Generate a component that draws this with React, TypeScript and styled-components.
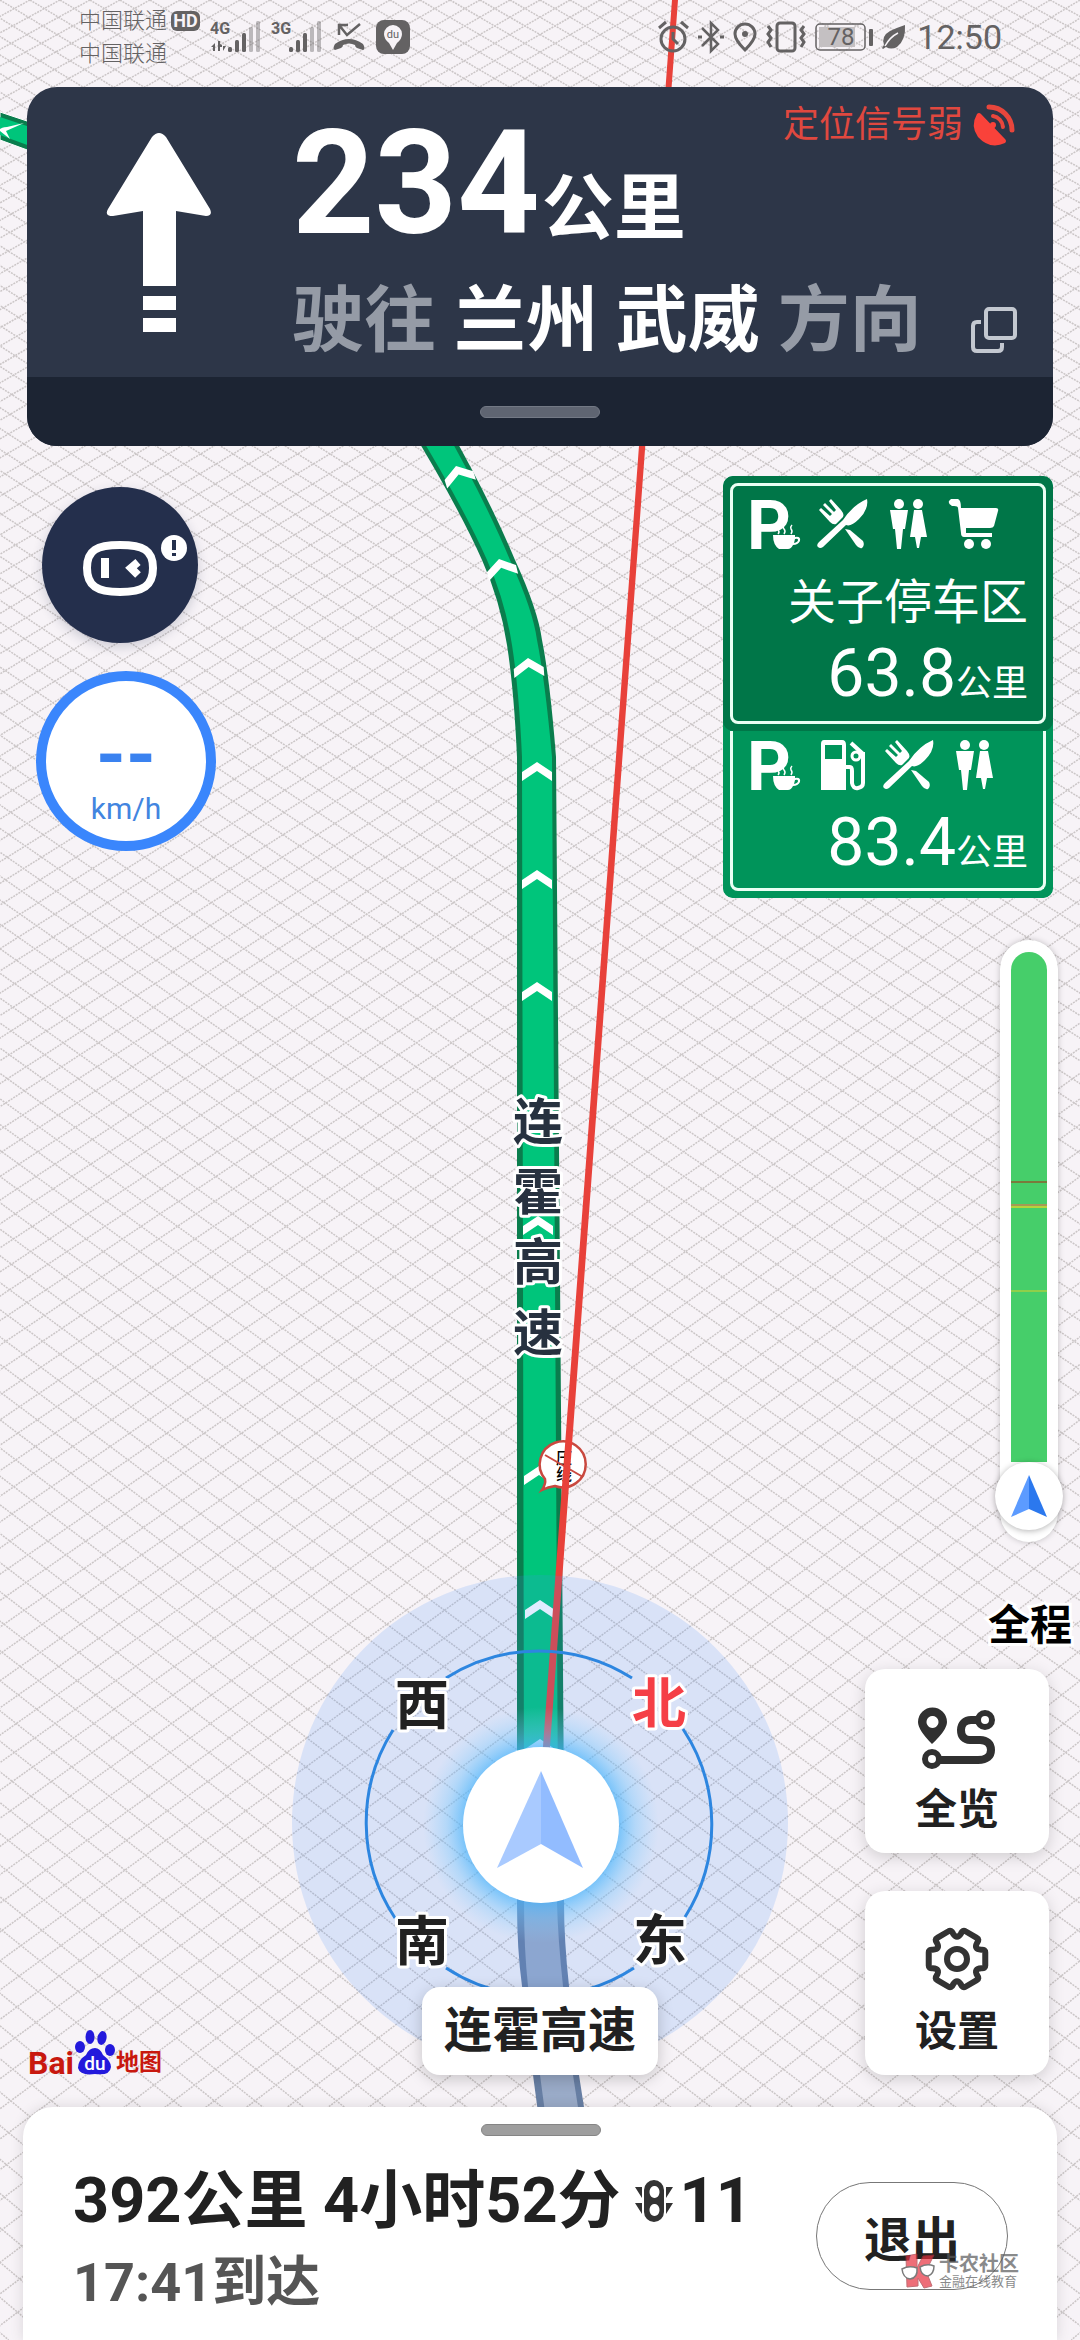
import React from 'react';
import styled, { createGlobalStyle } from 'styled-components';

const fontStack = 'Roboto, "Noto Sans CJK SC", sans-serif';
const ink = '#212121';
const statusInk = '#646263';

const GlobalStyle = createGlobalStyle`
  *, *::before, *::after { box-sizing: border-box; }
  body { margin: 0; background: #f7f3f7; font-family: ${fontStack}; color: ${ink}; }
  button { font: inherit; color: inherit; border: 0; padding: 0; background: none; cursor: pointer; }
  svg { overflow: visible; }
`;

/* ---------- shell ---------- */

const Screen = styled.div`
  position: relative;
  display: flex;
  flex-direction: column;
  min-height: 100vh;
  overflow: hidden;
  background: #f7f3f7;
`;

const MapCanvas = styled.svg`
  position: absolute;
  inset: 0;
  width: 100%;
  height: 100%;
`;

const Overlay = styled.div`
  position: relative;
  display: flex;
  flex: 1;
  flex-direction: column;
`;

/* ---------- status bar ---------- */

const StatusBar = styled.header`
  display: flex;
  justify-content: space-between;
  height: 87px;
  padding: 5px 78px 0 79px;
  color: ${statusInk};
`;

const StatusGroup = styled.div<{ $gap: number }>`
  display: flex;
  align-items: center;
  gap: ${(p) => p.$gap}px;
  height: 64px;
`;

const Carriers = styled.div`
  display: flex;
  flex-direction: column;
  font-size: 22px;
  font-weight: 300;
  line-height: 33px;
`;

const CarrierRow = styled.div`
  display: flex;
  align-items: center;
  gap: 4px;
`;

const HdBadge = styled.span`
  width: 29px;
  border-radius: 6px;
  background: ${statusInk};
  color: #f7f3f7;
  font-size: 18px;
  font-weight: 700;
  line-height: 20px;
  text-align: center;
`;

const Clock = styled.time`
  margin-left: 2px;
  font-size: 34px;
  line-height: 40px;
`;

/* ---------- guidance card ---------- */

const GuideCard = styled.section`
  margin: 0 27px;
  border-radius: 30px;
  overflow: hidden;
  background: #2d3648;
  color: #fff;
`;

const GuideMain = styled.div`
  display: grid;
  grid-template-columns: 265px minmax(0, 1fr);
  padding: 15px 36px 16px 0;
`;

const TurnArrow = styled.svg`
  display: block;
  margin: 30px 0 0 79px;
`;

const GuideBody = styled.div`
  display: flex;
  flex-direction: column;
  gap: 25px;
`;

const GuideRow = styled.div`
  display: flex;
  justify-content: space-between;
  align-items: flex-start;
`;

const GuideDistance = styled.p`
  margin: 0;
  padding-top: 10px;
  font-size: 144px;
  font-weight: 700;
  line-height: 144px;
  white-space: nowrap;
`;

const GuideUnit = styled.span`
  margin-left: 2px;
  font-size: 72px;
  line-height: 72px;
`;

const SignalWarning = styled.div`
  display: flex;
  align-items: center;
  gap: 10px;
  padding-top: 2px;
  color: #e0483f;
  font-size: 36px;
  line-height: 42px;
`;

const GuideDirection = styled.p`
  margin: 0;
  font-size: 72px;
  font-weight: 700;
  line-height: 80px;
  white-space: nowrap;
`;

const Muted = styled.span`
  color: #959ba6;
`;

const CopyButton = styled.button`
  align-self: center;
  padding-top: 18px;
  line-height: 0;
`;

const GuideFooter = styled.div`
  display: flex;
  justify-content: center;
  padding: 29px 0 28px;
  background: #1c2433;
`;

const Handle = styled.span<{ $fill: string; $edge: string }>`
  width: 120px;
  height: 12px;
  border: 1px solid ${(p) => p.$edge};
  border-radius: 6px;
  background: ${(p) => p.$fill};
`;

/* ---------- floating controls ---------- */

const Stage = styled.main`
  display: grid;
  flex: 1;
  grid-template-columns: minmax(0, 1fr) auto minmax(0, 1fr);
  padding: 30px 0 32px;
`;

const LeftRail = styled.div`
  display: flex;
  flex-direction: column;
  justify-content: space-between;
  padding: 11px 0 0 28px;
`;

const Gauges = styled.div`
  display: flex;
  flex-direction: column;
  align-items: flex-start;
  gap: 28px;
`;

const AssistantButton = styled.button`
  width: 156px;
  height: 156px;
  margin-left: 14px;
  border-radius: 50%;
  background: #242f4c;
  box-shadow: 0 4px 12px rgba(36, 47, 76, 0.2);
  line-height: 0;
`;

const SpeedDial = styled.div`
  display: flex;
  flex-direction: column;
  align-items: center;
  width: 180px;
  height: 180px;
  margin-left: 8px;
  padding-top: 40px;
  border: 10px solid #3a86fc;
  border-radius: 50%;
  background: #fff;
  color: #4285e0;
`;

const SpeedValue = styled.strong`
  color: #3a82f0;
  font-size: 76px;
  line-height: 68px;
`;

const SpeedUnit = styled.span`
  font-size: 30px;
  line-height: 40px;
`;

const Brand = styled.div`
  display: flex;
  align-items: flex-end;
  gap: 1px;
  color: #c8180f;
  font-weight: 700;
  line-height: 24px;
`;

const BrandLatin = styled.span`
  font-size: 32px;
`;

const BrandHan = styled.span`
  font-size: 23px;
`;

const RoadPill = styled.div`
  align-self: end;
  padding: 0 22px;
  border-radius: 18px;
  background: #fff;
  box-shadow: 0 4px 16px rgba(0, 0, 0, 0.2);
  font-size: 48px;
  font-weight: 700;
  line-height: 88px;
`;

const RightRail = styled.div`
  display: flex;
  flex-direction: column;
  align-items: flex-end;
`;

const SignBoard = styled.div`
  width: 330px;
  margin-right: 27px;
  border-radius: 10px;
  overflow: hidden;
  background: #00945a;
  color: #fff;
`;

const Sign = styled.section<{ $next?: boolean }>`
  padding: ${(p) => (p.$next ? '0 7px 7px' : '7px')};
  border-radius: 10px;
  background: ${(p) => (p.$next ? '#00945a' : '#007648')};
`;

const SignFrame = styled.div<{ $next?: boolean }>`
  display: flex;
  flex-direction: column;
  padding: ${(p) => (p.$next ? '9px 15px 5px 18px' : '13px 15px 7px 18px')};
  border: 3px solid #eafff4;
  border-top-width: ${(p) => (p.$next ? 0 : 3)}px;
  border-radius: ${(p) => (p.$next ? '0 0 8px 8px' : '8px')};
`;

const SignIcons = styled.div`
  display: flex;
  gap: 16px;
`;

const SignName = styled.h2`
  margin: 26px 0 0;
  font-size: 48px;
  font-weight: 400;
  line-height: 56px;
  text-align: right;
`;

const SignDistance = styled.p<{ $next?: boolean }>`
  margin: ${(p) => (p.$next ? 13 : 3)}px 0 0;
  font-size: 66px;
  line-height: 80px;
  text-align: right;
`;

const SignUnit = styled.span`
  font-size: 36px;
  line-height: 36px;
`;

const ProgressTrack = styled.div`
  display: flex;
  flex: 1;
  flex-direction: column;
  align-items: center;
  width: 58px;
  min-height: 300px;
  margin: 42px 22px 0 0;
  padding: 12px 11px;
  border-radius: 29px;
  background: #fff;
  box-shadow: 0 0 6px rgba(0, 0, 0, 0.22);
`;

const ProgressFill = styled.div`
  display: flex;
  flex: 1;
  flex-direction: column;
  width: 36px;
  border-radius: 18px 18px 0 0;
  background: #46ce6a;
`;

const Stretch = styled.span<{ $grow: number }>`
  flex: ${(p) => p.$grow} 0 0;
`;

const Jam = styled.span<{ $color: string }>`
  height: 2px;
  background: ${(p) => p.$color};
`;

const ProgressKnob = styled.div`
  display: flex;
  align-items: center;
  justify-content: center;
  width: 68px;
  height: 68px;
  border-radius: 50%;
  background: #fff;
  box-shadow: 0 1px 6px rgba(0, 0, 0, 0.3);
`;

const RouteScope = styled.span`
  margin: 63px 8px 22px 0;
  color: #000;
  font-size: 42px;
  font-weight: 700;
  line-height: 42px;
  paint-order: stroke fill;
  -webkit-text-stroke: 6px #fff;
`;

const ToolStack = styled.div`
  display: flex;
  flex-direction: column;
  gap: 38px;
  margin-right: 31px;
`;

const ToolButton = styled.button`
  display: flex;
  flex-direction: column;
  align-items: center;
  justify-content: flex-end;
  gap: 16px;
  width: 184px;
  height: 184px;
  padding-bottom: 18px;
  border-radius: 20px;
  background: #fff;
  box-shadow: 0 4px 16px rgba(0, 0, 0, 0.16);
  font-size: 42px;
  font-weight: 700;
  line-height: 50px;
`;

/* ---------- bottom sheet ---------- */

const Sheet = styled.footer`
  position: relative;
  display: flex;
  flex-direction: column;
  gap: 25px;
  margin: 0 23px;
  padding: 17px 49px 25px 50px;
  border-radius: 30px 30px 0 0;
  background: #fff;
  box-shadow: 0 0 14px rgba(0, 0, 0, 0.12);
`;

const SheetGrip = styled.div`
  display: flex;
  justify-content: center;
`;

const SheetRow = styled.div`
  display: flex;
  align-items: center;
  justify-content: space-between;
`;

const TripSummary = styled.p`
  display: flex;
  align-items: center;
  margin: 0 0 10px;
  font-size: 63px;
  font-weight: 700;
  line-height: 80px;
  white-space: pre;
`;

const Lights = styled.svg`
  margin: 0 7px 0 14px;
`;

const Arrival = styled.p`
  margin: 0;
  color: #555;
  font-size: 54px;
  font-weight: 700;
  line-height: 64px;
`;

const ExitButton = styled.button`
  width: 192px;
  height: 108px;
  margin-bottom: 4px;
  border: 1px solid #777;
  border-radius: 54px;
  font-size: 48px;
  font-weight: 700;
`;

const Watermark = styled.div`
  position: absolute;
  right: 38px;
  bottom: 51px;
  display: flex;
  align-items: center;
  gap: 4px;
  opacity: 0.7;
  color: #58595b;
`;

const WatermarkText = styled.div`
  display: flex;
  flex-direction: column;
  font-size: 13px;
  line-height: 14px;
`;

const WatermarkName = styled.strong`
  font-size: 20px;
  line-height: 21px;
`;

/* ---------- map drawing ---------- */

const gridPath = (() => {
  const span = 10260;
  const pitch = (y: number) => 30 + 0.0051 * y;
  let d = '';
  for (let n = 228; n <= 365; n += 1) {
    const top = span - n * pitch(0);
    const bottom = span - n * pitch(2340);
    d += `M${(540 + top).toFixed(1)} 0L${(540 + bottom).toFixed(1)} 2340`;
    d += `M${(540 - top).toFixed(1)} 0L${(540 - bottom).toFixed(1)} 2340`;
  }
  return d;
})();

const chevrons = [
  { x: 456, y: 466, turn: -17 },
  { x: 499, y: 559, turn: -14 },
  { x: 528, y: 658, turn: -4 },
  { x: 537, y: 762, turn: 0 },
  { x: 537, y: 870, turn: 0 },
  { x: 537, y: 982, turn: 0 },
  { x: 538, y: 1216, turn: 0 },
  { x: 539, y: 1466, turn: 0 },
  { x: 540, y: 1600, turn: 0 },
  { x: 540, y: 1739, turn: 0 },
];

const roadName = [
  { ch: '连', y: 1140 },
  { ch: '霍', y: 1210 },
  { ch: '高', y: 1280 },
  { ch: '速', y: 1351 },
];

const compass = [
  { ch: '西', x: 422, y: 1725, color: ink },
  { ch: '北', x: 659, y: 1723, color: '#f53f46' },
  { ch: '南', x: 422, y: 1961, color: ink },
  { ch: '东', x: 660, y: 1960, color: ink },
];

const MapText = styled.text<{ $size: number; $halo: number }>`
  font-family: ${fontStack};
  font-size: ${(p) => p.$size}px;
  font-weight: 700;
  text-anchor: middle;
  paint-order: stroke;
  stroke: #fff;
  stroke-width: ${(p) => p.$halo}px;
  stroke-linejoin: round;
`;

const BubbleText = styled.text`
  font-family: ${fontStack};
  font-size: 16px;
  font-weight: 500;
  text-anchor: middle;
`;

const NavMap = () => (
  <MapCanvas viewBox="0 0 1080 2340" preserveAspectRatio="xMidYMid slice" role="img" aria-label="导航地图">
    <defs>
      <radialGradient id="glow">
        <stop offset="0.62" stopColor="#3fb0fb" stopOpacity="0.75" />
        <stop offset="0.8" stopColor="#6cc4fc" stopOpacity="0.35" />
        <stop offset="1" stopColor="#8fd0fc" stopOpacity="0" />
      </radialGradient>
    </defs>
    <path d={gridPath} fill="none" stroke="#cbc6c7" strokeWidth="1.5" strokeDasharray="2 1" />

    <path d="M0 112L30 122V151L0 140Z" fill="#0a7d4d" stroke="#fff" />
    <path d="M0 117L30 127V146L0 135Z" fill="#00c57b" />
    <path d="M24 123L7 127Q-2 128 0 131L10 139L6 131Z" fill="#fff" />

    <path d="M517 1820V1903Q517 1950 522 1986L533 2075L539 2120H586L579 2075L569 1986Q564 1940 564 1903V1820Z" fill="#687fa4" />
    <path d="M524 1820V1903Q524 1950 528 1986L540 2075L546 2120H580L573 2075L563 1986Q558 1940 557 1903V1820Z" fill="#9aabc8" />

    <path d="M408 424Q458 506 482 560Q500 600 507 645Q514 690 517 757V1800H564L556 757Q550 680 542 640Q538 610 515 560Q490 500 447 424Z" fill="#0a7d4d" />
    <path d="M413 424Q463 506 487 560Q505 600 512 645Q519 690 522 757L524 1800H558L552 757Q545 680 537 640Q533 610 510 560Q485 500 442 424Z" fill="#00c57b" />
    {chevrons.map((c) => (
      <path key={c.y} d="M0 0L15 10V19L0 9L-15 19V10Z" fill="#fff" transform={`translate(${c.x} ${c.y}) rotate(${c.turn})`} />
    ))}

    {roadName.map((r) => (
      <MapText key={r.ch} $size={50} $halo={6} x="538" y={r.y} fill="#27313f">{r.ch}</MapText>
    ))}

    <g>
      <path d="M545 1479A23 23 0 1 1 555 1486Q548 1487 542 1490Q546 1484 545 1479Z" fill="#fff" stroke="#c9483f" strokeWidth="2.5" />
      <BubbleText x="564" y="1464">压</BubbleText>
      <BubbleText x="564" y="1480">线</BubbleText>
      <path d="M545 1455L583 1477" stroke="#c9483f" strokeWidth="2" />
    </g>

    <path d="M672 0H678L565 1540L549 1760H542L558 1540Z" fill="#e8413a" />

    <circle cx="540" cy="1823" r="248" fill="#4a90f7" fillOpacity="0.17" />
    <g fill="none" stroke="#2d86e0" strokeWidth="3">
      <path d="M446 1678A173 173 0 0 1 632 1678" />
      <path d="M683 1729A173 173 0 0 1 685 1917" />
      <path d="M634 1968A173 173 0 0 1 446 1968" />
      <path d="M395 1918A173 173 0 0 1 393 1730" />
    </g>
    <circle cx="541" cy="1825" r="118" fill="url(#glow)" />
    <circle cx="541" cy="1825" r="78" fill="#fff" />
    <path d="M541 1771L497 1868L541 1844Z" fill="#a9caff" />
    <path d="M541 1771L583 1868L541 1844Z" fill="#92bcff" />
    {compass.map((c) => (
      <MapText key={c.ch} $size={54} $halo={6} x={c.x} y={c.y} fill={c.color}>{c.ch}</MapText>
    ))}
  </MapCanvas>
);

/* ---------- icons ---------- */

const SignalBars = ({ label, data }: { label: string; data?: boolean }) => (
  <svg width="50" height="34" viewBox="0 0 50 34" fill={statusInk}>
    <text x="-1" y="14" fontFamily={fontStack} fontSize="16" fontWeight="700">{label}</text>
    {data && <path d="M4 31V23L0 27H2V31ZM7 21V31H9V27H11V25L9 24V21ZM12 26H15L12 31Z" />}
    <rect x="17" y="27" width="4" height="5" rx="1.5" />
    <rect x="24" y="20" width="4" height="12" rx="1.5" />
    <rect x="31" y="13" width="4" height="19" rx="1.5" />
    <g opacity="0.4">
      <rect x="38" y="7" width="4" height="25" rx="1.5" />
      <rect x="45" y="1" width="4" height="31" rx="1.5" />
    </g>
  </svg>
);

const MissedCall = () => (
  <svg width="32" height="28" viewBox="0 0 32 28" fill="none" stroke={statusInk}>
    <path d="M6 12V2H15M6 2L14 12L27 1" strokeWidth="2.5" />
    <path d="M2 21Q-1 26 2 27L8 25Q10 24 10 22Q16 19 22 22Q22 24 24 25L30 27Q33 26 30 21Q16 11 2 21Z" fill={statusInk} stroke="none" />
  </svg>
);

const MapAppIcon = () => (
  <svg width="34" height="34" viewBox="0 0 34 34">
    <rect width="34" height="34" rx="8" fill={statusInk} />
    <path d="M17 30L13 23Q8 19 8 14A9 9 0 0 1 26 14Q26 19 21 23Z" fill="#f7f3f7" />
    <text x="17" y="18" fontFamily={fontStack} fontSize="11" textAnchor="middle" fill={statusInk}>du</text>
  </svg>
);

const AlarmIcon = () => (
  <svg width="31" height="32" viewBox="0 0 31 32" fill="none" stroke={statusInk} strokeWidth="3">
    <circle cx="15" cy="18" r="12" />
    <path d="M15 11V18L20 23M1 7L8 1M23 1L30 7" />
  </svg>
);

const BluetoothIcon = () => (
  <svg width="26" height="32" viewBox="0 0 26 32" fill="none" stroke={statusInk} strokeWidth="2.5">
    <path d="M4 7L20 23L13 30V2L20 9L4 25" />
    <path d="M0 16H4M22 16H26" strokeWidth="3" />
  </svg>
);

const PinIcon = () => (
  <svg width="24" height="30" viewBox="0 0 24 30" fill="none" stroke={statusInk} strokeWidth="3">
    <path d="M12 28Q2 18 2 12A10 10 0 0 1 22 12Q22 18 12 28Z" />
    <circle cx="12" cy="12" r="3" fill={statusInk} stroke="none" />
  </svg>
);

const VibrateIcon = () => (
  <svg width="40" height="32" viewBox="0 0 40 32" fill="none" stroke={statusInk} strokeWidth="3">
    <rect x="11" y="2" width="18" height="28" rx="3" />
    <path d="M2 5L5 9L2 13L5 17L2 21L5 26M38 5L35 9L38 13L35 17L38 21L35 26" />
  </svg>
);

const BatteryIcon = () => (
  <svg width="58" height="28" viewBox="0 0 58 28">
    <rect x="1" y="1" width="49" height="26" rx="4" fill="none" stroke={statusInk} strokeWidth="1.5" />
    <rect x="4" y="4" width="36" height="20" fill="#c4c0c2" />
    <rect x="54" y="6" width="4" height="17" rx="1" fill={statusInk} />
    <text x="26" y="22" fontFamily={fontStack} fontSize="24" textAnchor="middle" fill={statusInk}>78</text>
  </svg>
);

const LeafIcon = () => (
  <svg width="24" height="26" viewBox="0 0 24 26">
    <path d="M23 1Q24 16 15 23Q9 26 4 23L1 25L0 24L2 21Q-1 12 8 7Q14 4 23 1Z" fill={statusInk} />
    <path d="M3 22Q8 13 16 9" fill="none" stroke="#f7f3f7" strokeWidth="1.5" />
  </svg>
);

const DishIcon = () => (
  <svg width="44" height="42" viewBox="0 0 44 42" fill="none" stroke="#e8463c" strokeLinecap="round">
    <path d="M4 10Q-3 22 5 33Q17 46 32 39Q34 37 32 35L8 10Q6 8 4 10Z" fill="#f9423a" stroke="none" />
    <path d="M19 23L16 27" stroke="#f9423a" strokeWidth="5" />
    <circle cx="20" cy="21" r="3" fill="#f9423a" stroke="none" />
    <path d="M16 3A23 23 0 0 1 39 26" strokeWidth="5" />
    <path d="M20 12A12 12 0 0 1 30 23" strokeWidth="4" />
  </svg>
);

const ParkingIcon = () => (
  <svg width="50" height="50" viewBox="0 0 50 50" fill="#fff">
    <text x="-4" y="50" fontFamily={fontStack} fontSize="68" fontWeight="700">P</text>
    <path d="M22 36H44V38Q50 37 49 42Q47 46 42 46Q40 50 37 50H28Q22 46 22 36ZM44 40L43 44Q47 43 47 41Q47 39 44 40Z" fillRule="evenodd" />
    <path d="M27 35Q29 33 27 31M33 35Q35 32 33 30Q31 27 34 25M40 35Q42 32 40 30Q39 28 41 26" fill="none" stroke="#fff" strokeWidth="1.5" />
  </svg>
);

const DiningIcon = () => (
  <svg width="50" height="50" viewBox="0 0 50 50" fill="#fff">
    <path d="M50 0Q52 10 42 20Q34 28 29 26L6 48Q3 50 1 48Q-1 46 2 43L26 21Q36 6 50 0Z" />
    <path d="M28 30L33 31L46 42Q48 46 45 49Q42 50 39 46Z" />
    <path d="M14 0L24 11Q29 17 24 20L19 25Q16 26 13 23L2 11L4 9L13 17L15 15L6 6L8 4L17 13L19 11L12 2Z" />
  </svg>
);

const RestroomIcon = () => (
  <svg width="50" height="50" viewBox="0 0 50 50" fill="#fff">
    <circle cx="16" cy="5" r="5" />
    <circle cx="35" cy="5" r="5" />
    <path d="M7 11H25L22 30H20L18 50H14L12 30H10Z" />
    <path d="M31 11H39L44 38H38L36 49H34L32 38H27Z" />
  </svg>
);

const CartIcon = () => (
  <svg width="50" height="50" viewBox="0 0 50 50" fill="#fff">
    <path d="M2 0H9Q12 1 12 9H47Q50 9 49 12L45 27Q44 29 41 29H17V34H43V38H15Q12 38 12 34L9 9Q9 7 5 7H3Q-1 5 0 2Z" />
    <circle cx="20" cy="45" r="5" />
    <circle cx="37" cy="45" r="5" />
  </svg>
);

const FuelIcon = () => (
  <svg width="50" height="50" viewBox="0 0 50 50" fill="#fff">
    <path d="M7 0H25Q29 0 29 5V50H4V4Q4 0 7 0ZM8 5V19H25V5Z" fillRule="evenodd" />
    <path d="M29 27H33Q35 27 35 31V43Q36 49 41 48Q46 47 46 43V14L34 3M46 19V12" fill="none" stroke="#fff" strokeWidth="4" />
    <circle cx="39" cy="16" r="4" fill="none" stroke="#fff" strokeWidth="3" />
  </svg>
);

const RouteIcon = () => (
  <svg width="78" height="61" viewBox="0 0 78 61" fill="none" stroke="#303030">
    <path d="M14 36Q0 22 0 14A14 14 0 0 1 29 14Q29 22 14 36ZM14 8A6 6 0 1 0 15 8Z" fill="#303030" fillRule="evenodd" stroke="none" />
    <circle cx="14" cy="51" r="7" strokeWidth="6" />
    <circle cx="67" cy="12" r="7" strokeWidth="6" />
    <path d="M22 52H60C69 52 73 48 73 42C73 36 69 32 62 32H52C46 32 43 28 43 22C43 16 47 12 53 12H60" strokeWidth="8" />
  </svg>
);

const gearOutline = (() => {
  const at = (deg: number, r: number) => {
    const a = (deg * Math.PI) / 180;
    return `${(32 + r * Math.cos(a)).toFixed(2)} ${(32 + r * Math.sin(a)).toFixed(2)}`;
  };
  let d = '';
  for (let k = 0; k < 360; k += 60) {
    d += `${k ? 'L' : 'M'}${at(k - 13, 29)}L${at(k + 13, 29)}`;
    d += `Q${at(k + 19, 30)} ${at(k + 21, 26)}Q${at(k + 30, 19)} ${at(k + 39, 26)}Q${at(k + 41, 30)} ${at(k + 47, 29)}`;
  }
  return `${d}Z`;
})();

const GearIcon = () => (
  <svg width="64" height="64" viewBox="0 0 64 64" fill="none" stroke="#333" strokeWidth="6" strokeLinejoin="round">
    <path d={gearOutline} />
    <circle cx="32" cy="32" r="10" />
  </svg>
);

const AssistantIcon = () => (
  <svg width="156" height="156" viewBox="0 0 156 156" fill="none" stroke="#fff">
    <path d="M78 58C101 58 111 63 111 81C111 99 101 105 78 105C55 105 45 99 45 81C45 63 55 58 78 58Z" strokeWidth="8" />
    <path d="M63 71V91" strokeWidth="8" />
    <path d="M96 75L89 81L96 88" strokeWidth="8" />
    <circle cx="132" cy="61" r="13" fill="#fff" stroke="none" />
    <path d="M132 53V63M132 66V69" stroke="#242f4c" strokeWidth="4" />
  </svg>
);

const PawLogo = () => (
  <svg width="40" height="45" viewBox="0 0 40 45" fill="#2319dc">
    <ellipse cx="5" cy="17" rx="5" ry="6" />
    <ellipse cx="15" cy="7" rx="4.5" ry="7" />
    <ellipse cx="27" cy="8" rx="4.5" ry="7" transform="rotate(12 27 8)" />
    <ellipse cx="35" cy="20" rx="5" ry="6" />
    <path d="M20 18Q25 18 28 25Q36 31 36 37Q35 46 20 44Q5 46 3 38Q3 30 11 25Q14 18 20 18Z" />
    <text x="20" y="40" fontFamily={fontStack} fontSize="19" fontWeight="500" textAnchor="middle" fill="#fff">du</text>
  </svg>
);

const TrafficLight = () => (
  <Lights width="38" height="42" viewBox="0 0 38 42" fill="#333">
    <path d="M0 7H7V18ZM0 23H7V34ZM38 7H31V18ZM38 23H31V34Z" />
    <path d="M19 0A10 10 0 0 1 29 10V32A10 10 0 0 1 9 32V10A10 10 0 0 1 19 0ZM19 6A5 6 0 1 0 20 6ZM19 24A5 6 0 1 0 20 24Z" fillRule="evenodd" />
  </Lights>
);

const CommunityLogo = () => (
  <svg width="34" height="35" viewBox="0 0 34 35" stroke="#444">
    <path d="M5 2L16 0V14L22 2L33 1L25 17L31 32L23 34L17 24V32L6 33Z" fill="#e8313f" stroke="#a8303a" />
    <path d="M1 15Q8 11 16 14Q17 24 9 25Q2 24 1 15ZM19 13Q26 9 33 12Q33 20 27 22Q20 22 19 13Z" fill="#fff" strokeWidth="1.5" />
  </svg>
);

/* ---------- app ---------- */

export default function App() {
  return (
    <>
      <GlobalStyle />
      <Screen>
        <NavMap />
        <Overlay>
          <StatusBar>
            <StatusGroup $gap={11}>
              <Carriers>
                <CarrierRow>中国联通<HdBadge>HD</HdBadge></CarrierRow>
                <CarrierRow>中国联通</CarrierRow>
              </Carriers>
              <SignalBars label="4G" data />
              <SignalBars label="3G" />
              <MissedCall />
              <MapAppIcon />
            </StatusGroup>
            <StatusGroup $gap={9}>
              <AlarmIcon />
              <BluetoothIcon />
              <PinIcon />
              <VibrateIcon />
              <BatteryIcon />
              <LeafIcon />
              <Clock>12:50</Clock>
            </StatusGroup>
          </StatusBar>

          <GuideCard aria-label="路线引导">
            <GuideMain>
              <TurnArrow width="106" height="200" viewBox="0 0 106 200" fill="#fff">
                <path d="M46 5Q53 -3 60 5L104 77Q107 84 100 84L70 79V154H37V79L7 84Q-2 84 2 77Z" />
                <path d="M37 164H70V178H37ZM37 186H70V200H37Z" />
              </TurnArrow>
              <GuideBody>
                <GuideRow>
                  <GuideDistance>234<GuideUnit>公里</GuideUnit></GuideDistance>
                  <SignalWarning>定位信号弱<DishIcon /></SignalWarning>
                </GuideRow>
                <GuideRow>
                  <GuideDirection><Muted>驶往</Muted> 兰州 武威 <Muted>方向</Muted></GuideDirection>
                  <CopyButton type="button" aria-label="切换窗口">
                    <svg width="46" height="46" viewBox="0 0 46 46" fill="none" stroke="#c3c8d0" strokeWidth="4">
                      <rect x="15" y="2" width="29" height="29" rx="3" />
                      <path d="M10 15H6Q2 15 2 19V40Q2 44 6 44H27Q31 44 31 40V36" />
                    </svg>
                  </CopyButton>
                </GuideRow>
              </GuideBody>
            </GuideMain>
            <GuideFooter><Handle $fill="#5f6572" $edge="#737985" /></GuideFooter>
          </GuideCard>

          <Stage>
            <LeftRail>
              <Gauges>
                <AssistantButton type="button" aria-label="语音助手"><AssistantIcon /></AssistantButton>
                <SpeedDial>
                  <SpeedValue>--</SpeedValue>
                  <SpeedUnit>km/h</SpeedUnit>
                </SpeedDial>
              </Gauges>
              <Brand>
                <BrandLatin>Bai</BrandLatin>
                <PawLogo />
                <BrandHan>地图</BrandHan>
              </Brand>
            </LeftRail>

            <RoadPill>连霍高速</RoadPill>

            <RightRail>
              <SignBoard>
                <Sign>
                  <SignFrame>
                    <SignIcons><ParkingIcon /><DiningIcon /><RestroomIcon /><CartIcon /></SignIcons>
                    <SignName>关子停车区</SignName>
                    <SignDistance>63.8<SignUnit>公里</SignUnit></SignDistance>
                  </SignFrame>
                </Sign>
                <Sign $next>
                  <SignFrame $next>
                    <SignIcons><ParkingIcon /><FuelIcon /><DiningIcon /><RestroomIcon /></SignIcons>
                    <SignDistance $next>83.4<SignUnit>公里</SignUnit></SignDistance>
                  </SignFrame>
                </Sign>
              </SignBoard>

              <ProgressTrack>
                <ProgressFill>
                  <Stretch $grow={229} />
                  <Jam $color="#7a7a3c" />
                  <Stretch $grow={21} />
                  <Jam $color="#a59a55" />
                  <Jam $color="#b5d43c" />
                  <Stretch $grow={83} />
                  <Jam $color="#8fcf4a" />
                  <Stretch $grow={170} />
                </ProgressFill>
                <ProgressKnob>
                  <svg width="38" height="42" viewBox="0 0 38 42">
                    <path d="M19 0L1 42L19 34Z" fill="#5c9bff" />
                    <path d="M19 0L37 42L19 34Z" fill="#2b78ee" />
                  </svg>
                </ProgressKnob>
              </ProgressTrack>

              <RouteScope>全程</RouteScope>

              <ToolStack>
                <ToolButton type="button"><RouteIcon />全览</ToolButton>
                <ToolButton type="button"><GearIcon />设置</ToolButton>
              </ToolStack>
            </RightRail>
          </Stage>

          <Sheet>
            <SheetGrip><Handle $fill="#9e9e9e" $edge="#858585" /></SheetGrip>
            <SheetRow>
              <div>
                <TripSummary>392公里 4小时52分<TrafficLight />11</TripSummary>
                <Arrival>17:41到达</Arrival>
              </div>
              <ExitButton type="button">退出</ExitButton>
            </SheetRow>
            <Watermark>
              <CommunityLogo />
              <WatermarkText>
                <WatermarkName>卡农社区</WatermarkName>
                金融在线教育
              </WatermarkText>
            </Watermark>
          </Sheet>
        </Overlay>
      </Screen>
    </>
  );
}
